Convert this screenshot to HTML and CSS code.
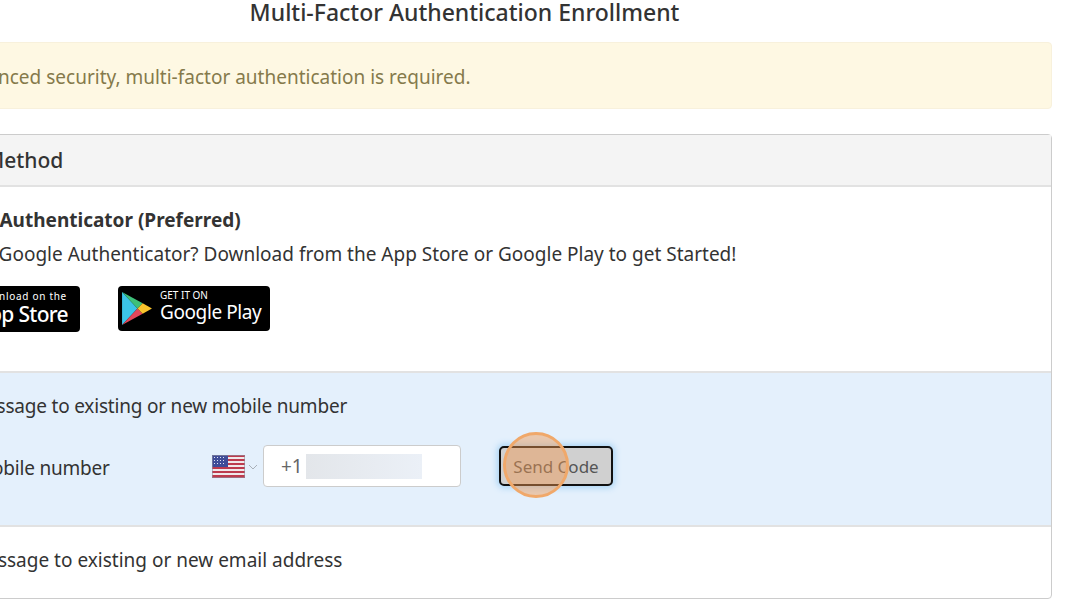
FILE: index.html
```html
<!DOCTYPE html>
<html lang="en">
<head>
  <meta charset="UTF-8" />
  <title>Multi-Factor Authentication Enrollment</title>
  <link rel="stylesheet" href="styles.css">
</head>
<body>
  <div class="container">
    <h1>Multi-Factor Authentication Enrollment</h1>
    <div class="alert">For enhanced security, multi-factor authentication is required.</div>

    <div class="card">
      <div class="card-header">Choose Method</div>

      <div class="option">
        <h2>Google Authenticator (Preferred)</h2>
        <p>Get the Google Authenticator? Download from the App Store or Google Play to get Started!</p>
        <div class="badges">
          <div class="badge badge-apple">
            <span class="badge-small">Download on the</span>
            <span class="badge-big">App Store</span>
          </div>
          <div class="badge badge-google">
            <svg class="play" viewBox="0 0 29 32" width="30" height="33">
              <path d="M0 0 L15 16 L0 32 Z" fill="#3bc4e8" />
              <path d="M0 0 L20 11 L15 16 Z" fill="#3ec07a" />
              <path d="M0 32 L20 21 L15 16 Z" fill="#e2475a" />
              <path d="M20 11 L29 16 L20 21 L15 16 Z" fill="#f8c32c" />
            </svg>
            <div class="badge-text">
              <span class="badge-tiny">GET IT ON</span>
              <span class="badge-name">Google Play</span>
            </div>
          </div>
        </div>
      </div>

      <div class="option option-active">
        <p>Text message to existing or new mobile number</p>
        <div class="phone-row">
          <label for="phone">Enter mobile number</label>
          <svg class="flag" viewBox="0 0 33 23" width="33" height="23">
            <rect width="33" height="23" fill="#f0e8ea" />
            <path d="M0 0h33v2H0zM0 4h33v2H0zM0 8h33v2H0zM0 12h33v2H0zM0 16h33v2H0zM0 20h33v3H0z" fill="#bd3b4e" />
            <rect width="16" height="12" fill="#3f4c98" />
            <path d="M2 2h1v1H2zM5 2h1v1H5zM8 2h1v1H8zM11 2h1v1h-1zM2 5h1v1H2zM5 5h1v1H5zM8 5h1v1H8zM11 5h1v1h-1zM2 8h1v1H2zM5 8h1v1H5zM8 8h1v1H8zM11 8h1v1h-1z" fill="#dfe3f2" />
            <rect x="0.5" y="0.5" width="32" height="22" fill="none" stroke="#8f8f9c" stroke-opacity="0.6" />
          </svg>
          <svg class="chevron" viewBox="0 0 10 6" width="10" height="6">
            <path d="M1 1 L5 5 L9 1" fill="none" stroke="#a9b0b8" stroke-width="1" />
          </svg>
          <div class="phone-input" id="phone">
            <span>+1</span>
            <span class="blurred"></span>
          </div>
          <div class="send-wrap">
            <button type="button">Send Code</button>
            <span class="click-mark"></span>
          </div>
        </div>
      </div>

      <div class="option option-last">
        <p>Text message to existing or new email address</p>
      </div>
    </div>
  </div>
</body>
</html>
```

FILE: styles.css
```css
html, body {
  height: 601px;
  overflow: hidden;
}
body {
  margin: 0;
  font-family: 'Noto Sans', 'Open Sans', sans-serif;
  font-size: 19px;
  color: #333;
  background-color: #fff;
}
.container {
  width: 1175px;
  margin-left: -123px;
}
h1 {
  margin: 0;
  height: 42px;
  line-height: 24px;
  font-size: 23px;
  font-weight: 500;
  text-align: center;
  color: #333;
}
.alert {
  height: 67px;
  line-height: 68px;
  box-sizing: border-box;
  padding-left: 41px;
  background-color: #fef8e3;
  border: 1px solid #f8f1dc;
  border-radius: 4px;
  color: #857a4b;
}
.card {
  margin-top: 25px;
  height: 465px;
  box-sizing: border-box;
  border: 1px solid #ccc;
  border-radius: 4px;
}
.card-header {
  height: 52px;
  line-height: 50px;
  box-sizing: border-box;
  padding-left: 27px;
  background-color: #f4f4f4;
  border-bottom: 2px solid #e2e2e2;
  font-size: 21px;
  font-weight: 500;
}
.option {
  padding-left: 50px;
  height: 186px;
  box-sizing: border-box;
  padding-top: 20px;
  border-bottom: 2px solid #e2e2e2;
}
.option h2 {
  margin: 0;
  line-height: 26px;
  font-size: 19px;
  font-weight: 700;
}
.option p {
  margin: 8px 0 0;
  line-height: 26px;
}
.badges {
  display: flex;
  gap: 38px;
  margin: 19px 0 0 5px;
}
.badge {
  background-color: #000;
  color: #fff;
  border-radius: 4px;
  height: 46px;
  box-sizing: border-box;
}
.badge-apple {
  width: 147px;
  padding: 4px 0 0 43px;
}
.badge-small {
  display: block;
  font-size: 10px;
  line-height: 13px;
  letter-spacing: 0.7px;
  white-space: nowrap;
}
.badge-big {
  display: block;
  font-size: 21px;
  line-height: 22px;
  font-weight: 500;
  letter-spacing: -0.7px;
  white-space: nowrap;
}
.badge-google {
  width: 152px;
  height: 45px;
  display: flex;
  align-items: center;
  gap: 8px;
  padding: 0 0 4px 4px;
}
.play {
  margin-top: 4px;
}
.badge-text {
  display: flex;
  flex-direction: column;
}
.badge-tiny {
  font-size: 10px;
  line-height: 11px;
}
.badge-name {
  font-size: 19px;
  line-height: 22px;
  letter-spacing: -0.4px;
  white-space: nowrap;
}
.option-active {
  height: 154px;
  padding-top: 12px;
  background-color: #e4f0fc;
  letter-spacing: -0.2px;
}
.option-active p {
  margin: 8px 0 0;
}
.phone-row {
  display: flex;
  align-items: center;
  margin-top: 26px;
}
.phone-row label {
  width: 289px;
  margin-left: -5px;
  padding-top: 4px;
  white-space: nowrap;
}
.flag {
  display: block;
}
.chevron {
  margin: 2px 0 0 3px;
}
.phone-input {
  width: 198px;
  height: 42px;
  margin-left: 5px;
  box-sizing: border-box;
  display: flex;
  align-items: center;
  gap: 4px;
  padding-left: 17px;
  background-color: #fff;
  border: 1px solid #ccc;
  border-radius: 4px;
  color: #666;
}
.blurred {
  width: 116px;
  height: 25px;
  background: linear-gradient(90deg, #e3e6ea, #ebf0f7);
}
.send-wrap {
  position: relative;
  margin-left: 38px;
}
button {
  display: block;
  width: 114px;
  height: 40px;
  padding: 0;
  font: inherit;
  font-size: 17px;
  color: #555;
  background-color: #d0d0d0;
  border: 2px solid #111;
  border-radius: 5px;
  box-shadow: 0 0 6px 2px #a9d4f5;
}
.click-mark {
  position: absolute;
  left: 4px;
  top: -14px;
  width: 66px;
  height: 66px;
  box-sizing: border-box;
  border: 3px solid #f0a86a;
  border-radius: 50%;
  background-color: rgba(240, 150, 80, 0.45);
}
.option-last {
  height: 72px;
  padding-top: 12px;
  border-bottom: none;
}
```
